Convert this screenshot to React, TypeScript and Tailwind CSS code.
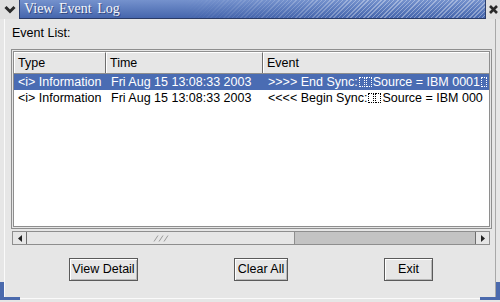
import React from "react";

function Box() {
  return (
    <span className="inline-block w-[6px] h-[10px] ml-[1px] border border-dotted border-current align-[-1px]" />
  );
}

export default function App() {
  const rows = [
    {
      sel: true,
      type: "<i> Information",
      time: "Fri Aug 15 13:08:33 2003",
      ev: (
        <>
          {">>>> End Sync:"}
          <Box />
          <Box />
          <span className="ml-[1px]">{"Source = IBM 0001"}</span>
          <Box />
        </>
      ),
    },
    {
      sel: false,
      type: "<i> Information",
      time: "Fri Aug 15 13:08:33 2003",
      ev: (
        <>
          {"<<<< Begin Sync:"}
          <Box />
          <Box />
          <span className="ml-[1px]">{"Source = IBM 000"}</span>
        </>
      ),
    },
  ];

  return (
    <div className="w-[500px] h-[302px] bg-[#e6e6e6] relative overflow-hidden font-['Liberation_Sans',Arial,sans-serif] text-black">
      {/* title bar */}
      <div className="flex h-[19px]">
        <div className="w-[20px] h-[19px] bg-[#e0e0e0] border-r border-[#2c3e6c] flex items-center justify-center">
          <svg width="12" height="9" viewBox="0 0 12 9">
            <path d="M1.5 2 L6 6.5 L10.5 2" stroke="#2a2a2a" strokeWidth="3" fill="none" />
          </svg>
        </div>
        <div className="flex-1 relative bg-gradient-to-b from-[#7592cd] to-[#4666ad] border-b border-[#2a3b66] flex items-center overflow-hidden">
          <div className="absolute inset-0 bg-[repeating-linear-gradient(135deg,rgba(255,255,255,0.35)_0px,rgba(255,255,255,0.35)_1px,transparent_1px,transparent_3px)] [mask-image:linear-gradient(to_right,transparent_35%,black_75%)]" />
          <span className="relative pl-[4px] text-[#f4f6fb] font-['Liberation_Serif',serif] text-[14px] leading-none [word-spacing:2px] [text-shadow:1px_1px_0_rgba(30,45,90,0.6)]">
            View Event Log
          </span>
        </div>
        <div className="w-[15px] h-[19px] bg-[#e0e0e0] border-l border-[#2c3e6c] flex items-center justify-center">
          <svg width="11" height="11" viewBox="0 0 11 11">
            <path d="M2 2 L9 9 M9 2 L2 9" stroke="#2a2a2a" strokeWidth="2.6" fill="none" />
          </svg>
        </div>
      </div>

      {/* body */}
      <div className="px-[4px] h-[280px]">
        <div className="h-full border-l border-r border-b border-l-[#fafafa] border-r-[#a8a8a8] border-b-[#fafafa] flex flex-col">
          <div className="pl-[7px] pt-[7px] text-[12.5px] leading-[14px]">Event List:</div>

          {/* scroll pane */}
          <div className="ml-[6px] mt-[9px] w-[481px] border border-[#8e8e8e] p-[1px]">
            <div className="border border-[#8e8e8e] bg-white h-[176px] flex flex-col">
              {/* header */}
              <div className="flex h-[22px] bg-[#e6e6e6] border-b border-[#8e8e8e] text-[12.5px] leading-[20px]">
                <div className="w-[92px] pl-[3px] border-l border-t border-white border-r border-r-[#6e6e6e]">Type</div>
                <div className="w-[157px] pl-[3px] border-l border-t border-white border-r border-r-[#6e6e6e]">Time</div>
                <div className="flex-1 pl-[3px] border-l border-t border-white">Event</div>
              </div>
              {rows.map((r, i) => (
                <div
                  key={i}
                  className={
                    "flex h-[16px] text-[12.5px] leading-[17px] whitespace-nowrap " +
                    (r.sel ? "bg-[#4a6cb3] text-white" : "text-black")
                  }
                >
                  <div className="w-[92px] pl-[4px] overflow-hidden">{r.type}</div>
                  <div className="w-[157px] pl-[5px] overflow-hidden">{r.time}</div>
                  <div className="flex-1 pl-[5px] overflow-hidden">{r.ev}</div>
                </div>
              ))}
            </div>
          </div>

          {/* horizontal scrollbar */}
          <div className="ml-[7px] mt-[2px] w-[478px] h-[14px] flex bg-[#c3c3c3] border border-[#8e8e8e]">
            <div className="w-[14px] h-full bg-[#e6e6e6] border-r border-[#6e6e6e] flex items-center justify-center">
              <svg width="6" height="7" viewBox="0 0 6 7">
                <path d="M5 0 L1 3.5 L5 7 Z" fill="#222" />
              </svg>
            </div>
            <div className="w-[268px] h-full bg-[#e6e6e6] border-r border-[#8e8e8e] flex items-center justify-center">
              <svg width="16" height="7" viewBox="0 0 16 7">
                <path d="M1 6.5 L5 0.5 M6 6.5 L10 0.5 M11 6.5 L15 0.5" stroke="#9a9a9a" strokeWidth="1" fill="none" />
              </svg>
            </div>
            <div className="flex-1" />
            <div className="w-[14px] h-full bg-[#e6e6e6] border-l border-[#6e6e6e] flex items-center justify-center">
              <svg width="6" height="7" viewBox="0 0 6 7">
                <path d="M1 0 L5 3.5 L1 7 Z" fill="#222" />
              </svg>
            </div>
          </div>

          {/* buttons */}
          <div className="flex gap-[96px] pl-[64px] mt-[13px]">
            {["View Detail", "Clear All", "Exit"].map((t, i) => (
              <button
                key={t}
                className={
                  "h-[23px] border border-[#5a5a5a] bg-[#e6e6e6] shadow-[inset_1px_1px_0_#ffffff,inset_-1px_-1px_0_#b8b8b8] text-[12.5px] leading-none " +
                  (i === 0 ? "w-[69px]" : i === 1 ? "w-[54px]" : "w-[49px]")
                }
              >
                {t}
              </button>
            ))}
          </div>
        </div>
      </div>

      {/* window-manager resize corner hints */}
      <div className="absolute left-0 bottom-[2px] w-[4px] h-[18px] bg-[#4b6aad]" />
      <div className="absolute left-0 bottom-[2px] w-[20px] h-[3px] bg-[#4b6aad]" />
      <div className="absolute right-0 bottom-[2px] w-[4px] h-[18px] bg-[#4b6aad]" />
      <div className="absolute right-0 bottom-[2px] w-[20px] h-[3px] bg-[#4b6aad]" />
    </div>
  );
}
